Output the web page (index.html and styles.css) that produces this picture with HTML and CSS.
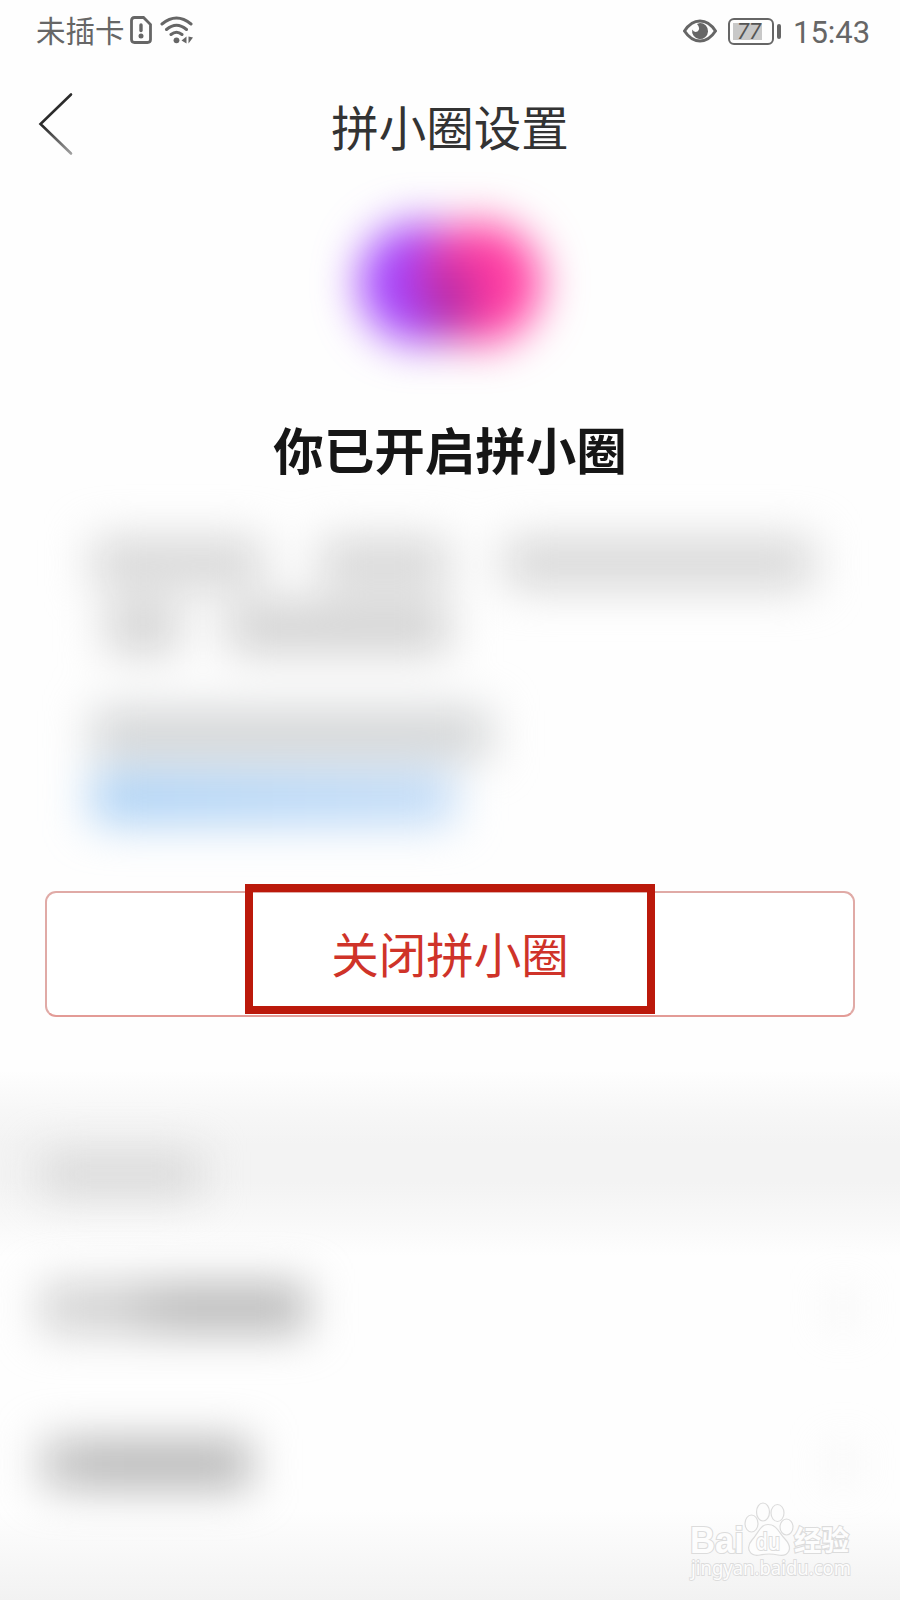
FILE: index.html
```
<!DOCTYPE html>
<html lang="zh-CN">
<head>
    <meta charset="UTF-8">
    <meta name="viewport" content="width=device-width, initial-scale=1.0">
    <title>拼小圈设置</title>
    <link rel="stylesheet" href="styles.css">
</head>
<body>
<div class="status-bar">
    <div class="status-left">
        <span class="carrier">未插卡</span>
        <svg class="sim-icon" width="22" height="28" viewBox="0 0 22 28" fill="none" stroke="#666" stroke-width="2.8">
            <path d="M4.500 1.500H13.500L20.500 8.500V23.500Q20.500 26.500 17.500 26.500H4.500Q1.500 26.500 1.500 23.500V4.500Q1.500 1.500 4.500 1.500Z"/>
            <path d="M11 9V14.500" stroke-width="3.400" stroke-linecap="round"/>
            <circle cx="11" cy="20" r="2.500" fill="#666" stroke="none"/>
        </svg>
        <svg class="wifi-icon" width="34" height="28" viewBox="0 0 34 28" fill="none" stroke="#666" stroke-width="3" stroke-linecap="round">
            <path d="M2 8Q16.500 -4 31 8M6.500 13.500Q16.500 5 26.500 13.500M11 18.500Q16.500 14 22 18.500"/>
            <circle cx="16.500" cy="24.300" r="2.900" fill="#666" stroke="none"/>
            <path d="M21.500 24.500L26.500 20.500V27.500ZM33 21.500L28.500 20.500V27.500Z" fill="#666" stroke="none"/>
        </svg>
    </div>
    <div class="status-right">
        <svg class="eye-icon" width="34" height="24" viewBox="0 0 34 24">
            <path d="M1.500 12Q8 2 17 2T32.500 12Q26 22 17 22T1.500 12Z" fill="none" stroke="#666" stroke-width="3"/>
            <path d="M17 4A8 8 0 1 1 9.200 10.500Q11 14 14.500 12.500Q18 9.500 14 5Z" fill="#666"/>
        </svg>
        <div class="battery"><span class="battery-level">77</span></div>
        <span class="time">15:43</span>
    </div>
</div>

<div class="nav-bar">
    <svg class="back-icon" width="36" height="64" viewBox="0 0 36 64">
        <defs>
            <linearGradient id="back-fade" gradientUnits="userSpaceOnUse" x1="0" y1="0" x2="0" y2="64">
                <stop offset="0.550" stop-color="#2b2b2b"/>
                <stop offset="1" stop-color="#aaa"/>
            </linearGradient>
        </defs>
        <path d="M33 2.500L2.500 32L33 61.500" fill="none" stroke="url(#back-fade)" stroke-width="2.600" stroke-linecap="round"/>
    </svg>
    <h1>拼小圈设置</h1>
</div>

<div class="logo">
    <div class="circle purple"></div>
    <div class="circle pink"></div>
    <div class="overlap"></div>
</div>

<h2>你已开启拼小圈</h2>

<!-- 模糊处理的说明文字 -->
<div class="intro">
    <div class="line"><i class="w168"></i><i class="w126"></i><i class="w306"></i></div>
    <div class="line second"><i class="w64"></i><i class="w218"></i></div>
    <div class="line third"><i class="w394"></i></div>
    <div class="line link"><i class="w358"></i></div>
</div>

<div class="close-btn">
    <div class="highlight"><span>关闭拼小圈</span></div>
</div>

<!-- 模糊处理的设置列表 -->
<div class="group-title"><i></i></div>
<div class="setting-row"><i class="item"></i><i class="arrow"></i></div>
<div class="setting-row last"><i class="item"></i><i class="arrow"></i></div>

<div class="watermark">
    <svg width="175" height="90" viewBox="0 0 175 90">
        <g class="mark">
            <text class="bold" x="3" y="51" font-size="36" textLength="54" lengthAdjust="spacingAndGlyphs">Bai</text>
            <ellipse cx="64.500" cy="21.500" rx="6.500" ry="8.500"/>
            <ellipse cx="76" cy="10" rx="6.500" ry="9"/>
            <ellipse cx="90.500" cy="11" rx="6.500" ry="8.500"/>
            <ellipse cx="99.500" cy="25" rx="6.500" ry="8"/>
            <path d="M81 22.500C90 22.500 92 31 98 37C107 47 101 55 91 53Q82 51 73 53C63 55 58 46 65 38C71 32 73 22.500 81 22.500Z"/>
            <text class="du" x="69" y="48" font-size="24" textLength="24" lengthAdjust="spacingAndGlyphs">du</text>
            <text class="cn" x="107" y="49" font-size="28" textLength="55" lengthAdjust="spacingAndGlyphs">经验</text>
            <text class="site" x="4" y="73" font-size="19" textLength="160" lengthAdjust="spacingAndGlyphs">jingyan.baidu.com</text>
        </g>
    </svg>
</div>
</body>
</html>
```
FILE: styles.css
```
* {
    box-sizing: border-box;
}
body {
    font-family: "Noto Sans CJK SC", sans-serif;
    margin: 0;
    width: 900px;
    height: 1600px;
    overflow: hidden;
    display: flex;
    flex-direction: column;
    background: linear-gradient(#fefefe 0, #fefefe 1510px, #f2f2f2 1600px);
}
h1, h2 {
    margin: 0;
}
i {
    display: block;
}
.status-bar {
    height: 62px;
    padding: 0 31px 0 36px;
    display: flex;
    justify-content: space-between;
    align-items: center;
    color: #666;
}
.status-left, .status-right {
    display: flex;
    align-items: center;
}
.carrier {
    font-size: 29.5px;
    line-height: 62px;
    padding-bottom: 4px;
}
.sim-icon {
    margin-left: 5px;
    margin-top: -3px;
}
.wifi-icon {
    margin-left: 8px;
    margin-top: -2px;
}
.eye-icon {
    margin-right: 11px;
    margin-top: -1px;
}
.battery {
    position: relative;
    width: 46px;
    height: 27px;
    padding: 4px;
    border: 2.5px solid #666;
    border-radius: 6px;
    margin-right: 19px;
}
.battery::after {
    content: "";
    position: absolute;
    right: -9px;
    top: 4px;
    width: 4px;
    height: 15px;
    border-radius: 2px;
    background: #666;
}
.battery-level {
    display: block;
    width: 29px;
    height: 17px;
    margin: -1px 0 0 -1px;
    padding-left: 4px;
    background: #c8c8c8;
    font-family: Roboto, sans-serif;
    font-style: italic;
    font-size: 22px;
    line-height: 18px;
    color: #555;
}
.time {
    width: 76px;
    font-family: Roboto, sans-serif;
    font-size: 31px;
    line-height: 62px;
    padding-top: 3px;
    white-space: nowrap;
}
.nav-bar {
    height: 132px;
    padding-left: 38px;
    display: flex;
}
.back-icon {
    margin-top: 30px;
}
.nav-bar h1 {
    flex: 1;
    padding-right: 74px;
    text-align: center;
    font-size: 47.5px;
    font-weight: 400;
    line-height: 127px;
    color: #333;
}
.logo {
    height: 176px;
    padding-top: 28px;
    display: flex;
    justify-content: center;
    position: relative;
    filter: blur(22px);
}
.circle {
    width: 122px;
    height: 122px;
    border-radius: 50%;
}
.purple {
    background: #a242fb;
}
.pink {
    margin-left: -62px;
    background: #ff3ba0;
}
.overlap {
    position: absolute;
    left: 426px;
    top: 64px;
    width: 48px;
    height: 82px;
    border-radius: 50%;
    background: #b42aa6;
}
h2 {
    height: 164px;
    text-align: center;
    font-size: 50.5px;
    font-weight: 700;
    line-height: 157px;
    color: #161616;
}
.intro {
    height: 357px;
    padding: 5px 0 0 92px;
    filter: blur(23px);
}
.line {
    display: flex;
    gap: 55px;
    height: 48px;
}
.line i {
    height: 48px;
    background: #d5d5d5;
}
.second {
    margin-top: 17px;
    padding-left: 15px;
    gap: 48px;
}
.second i {
    background: #cfcfcf;
}
.third {
    margin-top: 58px;
}
.third i {
    background: #d0d2d3;
}
.link {
    margin-top: 16px;
}
.link i {
    background: linear-gradient(90deg, #a4cdf4, #bbd8f7);
}
.w64 { width: 72px; }
.w126 { width: 130px; }
.w168 { width: 172px; }
.w218 { width: 222px; }
.w306 { width: 310px; }
.w358 { width: 362px; }
.w394 { width: 398px; }
.close-btn {
    width: 810px;
    height: 126px;
    margin: 0 45px;
    display: flex;
    justify-content: center;
    border: 2px solid #e0aaa6;
    border-bottom-color: #e39b96;
    border-radius: 11px;
    background: #fff;
}
.highlight {
    width: 410px;
    height: 130px;
    margin-top: -9px;
    border: 8px solid #bb190b;
    text-align: center;
    font-size: 47.5px;
    color: #cf3329;
}
.highlight span {
    display: block;
    height: 114px;
    line-height: 121px;
}
.group-title {
    height: 186px;
    margin-top: 53px;
    padding: 82px 0 0 41px;
    background: linear-gradient(rgba(243, 243, 243, 0) 0, #f7f7f7 22%, #f3f3f3 40%, #f3f3f3 60%, #f8f8f8 80%, rgba(243, 243, 243, 0) 100%);
}
.group-title i {
    width: 160px;
    height: 44px;
    background: #dadada;
    filter: blur(21px);
}
.setting-row {
    height: 156px;
    margin-top: -26px;
    padding: 0 50px 0 41px;
    display: flex;
    justify-content: space-between;
    align-items: center;
    filter: blur(22px);
}
.item {
    width: 266px;
    height: 50px;
    background: linear-gradient(90deg, #d2d2d2 25%, #b9b9b9 50%);
}
.arrow {
    width: 14px;
    height: 30px;
    background: #e8e8e8;
}
.last {
    margin-top: 0;
}
.last .item {
    width: 210px;
    background: linear-gradient(90deg, #c8c8c8, #b7b7b7 30%);
}
/* 右下角水印 */
.watermark {
    position: absolute;
    left: 687px;
    top: 1502px;
}
.mark {
    fill: #fdfdfd;
    stroke: #dcdcdc;
    stroke-width: 1.2;
    font-family: "Open Sans", sans-serif;
}
.mark text {
    paint-order: stroke;
    stroke-width: 2.2;
}
.mark .bold, .mark .cn {
    font-weight: 700;
}
.mark .bold {
    font-family: "Liberation Sans", sans-serif;
}
.mark .du {
    font-weight: 600;
}
.mark .cn {
    font-family: "Noto Sans CJK SC", sans-serif;
}
.mark .site {
    font-family: "Noto Sans", sans-serif;
    stroke-width: 1.8;
}
```
